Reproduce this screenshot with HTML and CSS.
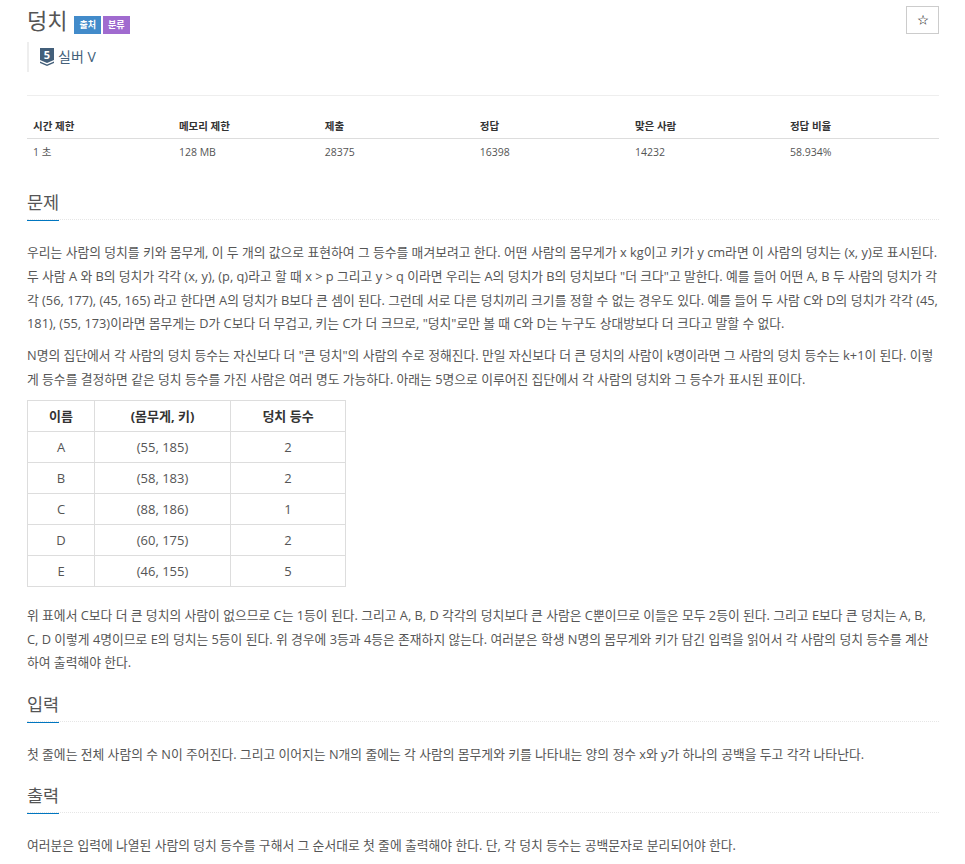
FILE: index.html
```html
<!DOCTYPE html>
<html lang="ko">
<head>
    <meta charset="UTF-8">
    <meta name="viewport" content="width=device-width, initial-scale=1.0">
    <title>덩치</title>
    <link rel="stylesheet" href="styles.css">
</head>
<body>
    <div class="page-header">
        <div class="title-row">
            <h1>덩치</h1>
            <span class="label label-source">출처</span>
            <span class="label label-tag">분류</span>
            <button class="star-button">☆</button>
        </div>
        <blockquote class="tier">
            <svg class="tier-icon" width="14" height="18" viewBox="0 0 14 18">
                <path d="M0 0H14V12L7 15L0 12Z" fill="#435f7a"/>
                <path d="M0 13.5L7 16.5L14 13.5V15L7 18L0 15Z" fill="#435f7a"/>
                <text x="7" y="11" text-anchor="middle" class="tier-num">5</text>
            </svg>
            <span>실버 V</span>
        </blockquote>
    </div>

    <table class="info-table">
        <thead>
            <tr>
                <th class="col-time">시간 제한</th>
                <th class="col-time">메모리 제한</th>
                <th class="col-num">제출</th>
                <th class="col-num">정답</th>
                <th class="col-num">맞은 사람</th>
                <th>정답 비율</th>
            </tr>
        </thead>
        <tbody>
            <tr>
                <td>1 초</td>
                <td>128 MB</td>
                <td>28375</td>
                <td>16398</td>
                <td>14232</td>
                <td>58.934%</td>
            </tr>
        </tbody>
    </table>

    <section class="section">
        <div class="headline"><h2>문제</h2></div>
        <p>우리는 사람의 덩치를 키와 몸무게, 이 두 개의 값으로 표현하여 그 등수를 매겨보려고 한다. 어떤 사람의 몸무게가 x kg이고 키가 y cm라면 이 사람의 덩치는 (x, y)로 표시된다. 두 사람 A 와 B의 덩치가 각각 (x, y), (p, q)라고 할 때 x &gt; p 그리고 y &gt; q 이라면 우리는 A의 덩치가 B의 덩치보다 "더 크다"고 말한다. 예를 들어 어떤 A, B 두 사람의 덩치가 각각 (56, 177), (45, 165) 라고 한다면 A의 덩치가 B보다 큰 셈이 된다. 그런데 서로 다른 덩치끼리 크기를 정할 수 없는 경우도 있다. 예를 들어 두 사람 C와 D의 덩치가 각각 (45, 181), (55, 173)이라면 몸무게는 D가 C보다 더 무겁고, 키는 C가 더 크므로, "덩치"로만 볼 때 C와 D는 누구도 상대방보다 더 크다고 말할 수 없다.</p>
        <p>N명의 집단에서 각 사람의 덩치 등수는 자신보다 더 "큰 덩치"의 사람의 수로 정해진다. 만일 자신보다 더 큰 덩치의 사람이 k명이라면 그 사람의 덩치 등수는 k+1이 된다. 이렇게 등수를 결정하면 같은 덩치 등수를 가진 사람은 여러 명도 가능하다. 아래는 5명으로 이루어진 집단에서 각 사람의 덩치와 그 등수가 표시된 표이다.</p>
        <table class="rank-table">
            <thead>
                <tr><th class="col-name">이름</th><th class="col-size">(몸무게, 키)</th><th>덩치 등수</th></tr>
            </thead>
            <tbody>
                <tr><td>A</td><td>(55, 185)</td><td>2</td></tr>
                <tr><td>B</td><td>(58, 183)</td><td>2</td></tr>
                <tr><td>C</td><td>(88, 186)</td><td>1</td></tr>
                <tr><td>D</td><td>(60, 175)</td><td>2</td></tr>
                <tr><td>E</td><td>(46, 155)</td><td>5</td></tr>
            </tbody>
        </table>
        <p>위 표에서 C보다 더 큰 덩치의 사람이 없으므로 C는 1등이 된다. 그리고 A, B, D 각각의 덩치보다 큰 사람은 C뿐이므로 이들은 모두 2등이 된다. 그리고 E보다 큰 덩치는 A, B, C, D 이렇게 4명이므로 E의 덩치는 5등이 된다. 위 경우에 3등과 4등은 존재하지 않는다. 여러분은 학생 N명의 몸무게와 키가 담긴 입력을 읽어서 각 사람의 덩치 등수를 계산하여 출력해야 한다.</p>
    </section>

    <section class="section">
        <div class="headline"><h2>입력</h2></div>
        <p>첫 줄에는 전체 사람의 수 N이 주어진다. 그리고 이어지는 N개의 줄에는 각 사람의 몸무게와 키를 나타내는 양의 정수 x와 y가 하나의 공백을 두고 각각 나타난다.</p>
    </section>

    <section class="section">
        <div class="headline"><h2>출력</h2></div>
        <p>여러분은 입력에 나열된 사람의 덩치 등수를 구해서 그 순서대로 첫 줄에 출력해야 한다. 단, 각 덩치 등수는 공백문자로 분리되어야 한다.</p>
    </section>
</body>
</html>
```

FILE: styles.css
```css
body {
    font-family: "Open Sans", "Noto Sans CJK KR", sans-serif;
    font-size: 14px;
    line-height: 24px;
    color: #555;
    margin: 0;
    padding: 0 26px 0 27px;
    background-color: #fff;
}
.page-header {
    border-bottom: 1px solid #eee;
    height: 95px;
    margin-bottom: 15px;
}
.title-row {
    display: flex;
    align-items: flex-start;
    height: 42px;
}
h1 {
    font-size: 22px;
    font-weight: 400;
    line-height: 33px;
    margin: 4px 7px 0 0;
    color: #555;
}
.label {
    margin: 16px 2px 0 0;
    height: 18px;
    padding: 0 5px;
    font-size: 9px;
    font-weight: 700;
    line-height: 18px;
    color: #fff;
}
.label-source {
    background-color: #428bca;
}
.label-tag {
    background-color: #a06bcf;
}
.star-button {
    margin: 6px 0 0 auto;
    width: 33px;
    height: 28px;
    padding: 0;
    background: #fff;
    border: 1px solid #ccc;
    font-size: 12px;
    color: #222;
}
.tier {
    display: flex;
    align-items: center;
    gap: 4px;
    margin: 0;
    height: 30px;
    padding-left: 11px;
    border-left: 2px solid #eee;
    font-size: 14px;
    color: #435f7a;
}
.tier-num {
    fill: #fff;
    font-size: 11px;
    font-weight: 700;
}
.info-table {
    width: 100%;
    border-collapse: collapse;
    table-layout: fixed;
    font-size: 10.5px;
    margin-bottom: 22px;
}
.info-table th,
.info-table td {
    box-sizing: border-box;
}
.info-table th {
    text-align: left;
    font-weight: 700;
    color: #333;
    line-height: 20px;
    padding: 5px 6px 2px;
    border-bottom: 1px solid #ddd;
}
.info-table td {
    line-height: 20px;
    padding: 3px 6px 5px;
}
.col-time {
    width: 16%;
}
.col-num {
    width: 17%;
}
.section {
    margin-bottom: 15.5px;
}
.headline {
    display: flex;
    height: 30px;
    border-bottom: 1px dotted #e6e6e6;
    margin-bottom: 21px;
}
h2 {
    font-size: 17.5px;
    font-weight: 400;
    line-height: 26px;
    height: 31px;
    margin: 0;
    border-bottom: 1px solid #0076c0;
}
p {
    font-size: 12.8px;
    line-height: 23.8px;
    margin: 0 0 8px;
}
.rank-table {
    border-collapse: collapse;
    table-layout: fixed;
    width: 319px;
    margin-bottom: 17px;
    font-size: 13px;
}
.rank-table th,
.rank-table td {
    box-sizing: border-box;
    border: 1px solid #ddd;
    text-align: center;
    height: 31px;
    padding: 0;
}
.rank-table th {
    color: #333;
    font-weight: 700;
}
.col-name {
    width: 67px;
}
.col-size {
    width: 136px;
}
```
